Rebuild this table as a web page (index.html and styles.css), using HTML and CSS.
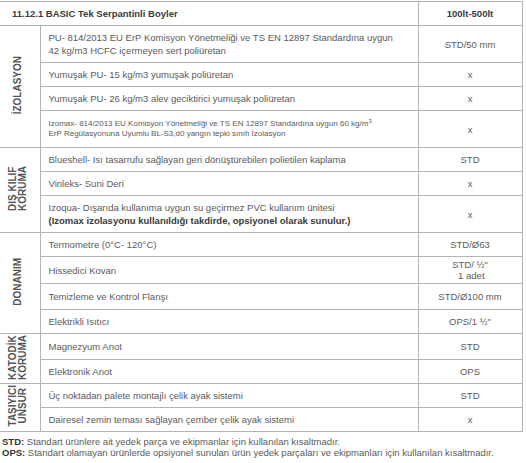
FILE: index.html
```html
<!DOCTYPE html>
<html lang="tr">
<head>
<meta charset="utf-8">
<link rel="stylesheet" href="styles.css">
</head>
<body>
<table class="spec">
  <colgroup>
    <col class="c-label">
    <col class="c-text">
    <col class="c-val">
  </colgroup>
  <tr class="head">
    <th colspan="2" class="title">11.12.1 BASIC Tek Serpantinli Boyler</th>
    <th class="val">100lt-500lt</th>
  </tr>
  <tr class="two">
    <td rowspan="4" class="grp"><span>İZOLASYON</span></td>
    <td>PU- 814/2013 EU ErP Komisyon Yönetmeliği ve TS EN 12897 Standardına uygun<br>42 kg/m3 HCFC içermeyen sert poliüretan</td>
    <td class="val">STD/50 mm</td>
  </tr>
  <tr><td>Yumuşak PU- 15 kg/m3 yumuşak poliüretan</td><td class="val">x</td></tr>
  <tr><td>Yumuşak PU- 26 kg/m3 alev geciktirici yumuşak poliüretan</td><td class="val">x</td></tr>
  <tr class="small">
    <td>Izomax- 814/2013 EU Komisyon Yönetmeliği ve TS EN 12897 Standardına uygun 60 kg/m<sup>3</sup><br>ErP Regülasyonuna Uyumlu BL-S3,d0 yangın tepki sınıfı  İzolasyon</td>
    <td class="val">x</td>
  </tr>
  <tr>
    <td rowspan="3" class="grp"><span>DIŞ KILIF<br>KORUMA</span></td>
    <td>Blueshell- Isı tasarrufu sağlayan geri dönüştürebilen polietilen kaplama</td>
    <td class="val">STD</td>
  </tr>
  <tr><td>Vinleks- Suni Deri</td><td class="val">x</td></tr>
  <tr class="two">
    <td>Izoqua- Dışarıda kullanıma uygun su geçirmez PVC kullanım ünitesi<br><b>(Izomax izolasyonu kullanıldığı takdirde, opsiyonel olarak sunulur.)</b></td>
    <td class="val">x</td>
  </tr>
  <tr>
    <td rowspan="4" class="grp"><span>DONANIM</span></td>
    <td>Termometre (0°C- 120°C)</td>
    <td class="val">STD/Ø63</td>
  </tr>
  <tr class="tight"><td>Hissedici Kovan</td><td class="val">STD/ ½"<br>&nbsp;1 adet</td></tr>
  <tr class="tall"><td>Temizleme ve Kontrol Flanşı</td><td class="val">STD/Ø100 mm</td></tr>
  <tr><td>Elektrikli Isıtıcı</td><td class="val">OPS/1 ½"</td></tr>
  <tr class="tall">
    <td rowspan="2" class="grp"><span>KATODİK<br>KORUMA</span></td>
    <td>Magnezyum Anot</td>
    <td class="val">STD</td>
  </tr>
  <tr><td>Elektronik Anot</td><td class="val">OPS</td></tr>
  <tr>
    <td rowspan="2" class="grp"><span>TAŞIYICI<br>UNSUR</span></td>
    <td>Üç noktadan palete montajlı çelik ayak sistemi</td>
    <td class="val">STD</td>
  </tr>
  <tr><td>Dairesel zemin teması sağlayan çember çelik ayak sistemi</td><td class="val">x</td></tr>
</table>
<div class="notes">
  <p><b>STD:</b> Standart ürünlere ait yedek parça ve ekipmanlar için kullanılan kısaltmadır.</p>
  <p><b>OPS:</b> Standart olamayan ürünlerde opsiyonel sunulan ürün yedek parçaları ve ekipmanları için kullanılan kısaltmadır.</p>
</div>
</body>
</html>
```

FILE: styles.css
```css
html, body {
  margin: 0;
  padding: 0;
  background: #ffffff;
}
body {
  font-family: "Liberation Sans", Arial, sans-serif;
  font-size: 9.5px;
  color: #5a5a5a;
}
.spec {
  border-collapse: collapse;
  width: 522px;
  table-layout: fixed;
  margin-top: 1px;
}
.c-label { width: 40px; }
.c-text { width: 378px; }
.c-val { width: 104px; }

.spec td, .spec th {
  border-top: 1px solid #b4b4b4;
  border-bottom: 1px solid #b4b4b4;
  padding: 5px 8px;
  line-height: 13px;
  height: 13px;
  text-align: left;
  vertical-align: middle;
  font-weight: normal;
}
.spec .val {
  text-align: center;
  border-left: 1px solid #b4b4b4;
  border-right: 1px solid #b4b4b4;
  padding: 5px 2px;
}
.spec .grp {
  border-right: 1px solid #b4b4b4;
  padding: 0 0 0 0;
  text-align: center;
}
.grp span {
  display: inline-block;
  writing-mode: vertical-rl;
  transform: rotate(180deg);
  font-size: 10px;
  line-height: 10px;
  font-weight: bold;
  color: #555555;
  text-align: center;
  margin-right: 3px;
}
.head th {
  height: 12px;
  font-weight: bold;
  color: #3a3a3a;
  padding: 5px 12px;
}
.head th.val {
  padding: 5px 2px;
  text-align: center;
}
.small td:first-child {
  font-size: 8px;
  line-height: 10px;
  padding-top: 8px;
  padding-bottom: 8px;
}
.small sup {
  font-size: 6px;
  line-height: 0;
  vertical-align: 3px;
}
.tight td.val {
  line-height: 11px;
  padding-top: 2px;
  padding-bottom: 2px;
}
.tall td { padding-top: 6px; padding-bottom: 6px; }
.spec td b {
  color: #3a3a3a;
}
.notes {
  margin-top: 4px;
  padding-left: 2px;
}
.notes p {
  margin: 0;
  line-height: 11px;
}
.notes b {
  color: #333;
}
```
